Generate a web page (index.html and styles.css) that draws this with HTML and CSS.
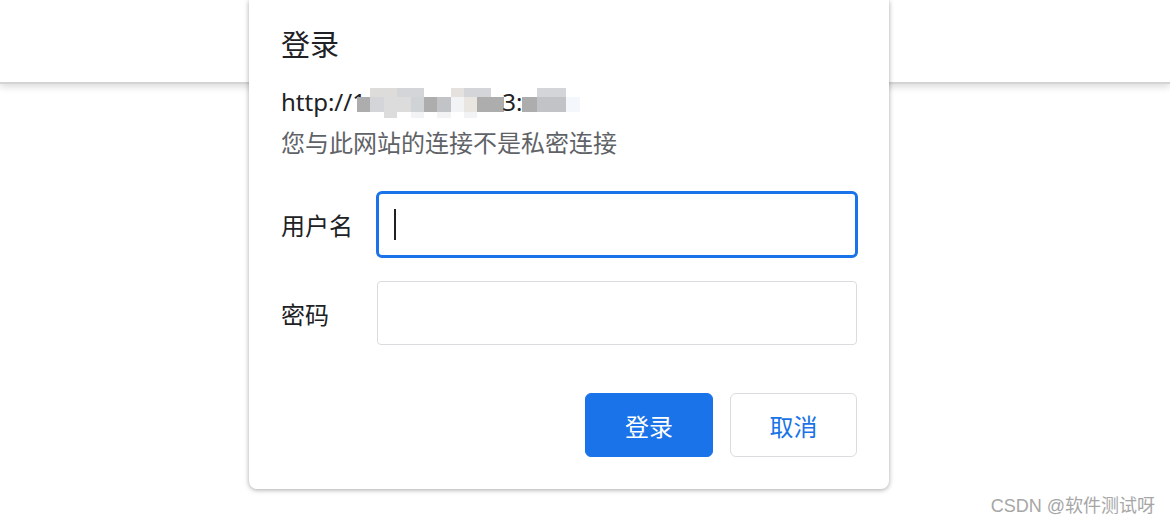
FILE: index.html
```html
<!DOCTYPE html>
<html lang="zh-CN">
<head>
  <meta charset="UTF-8">
  <title>登录</title>
  <link rel="stylesheet" href="styles.css">
</head>
<body>

  <div class="toolbar"></div>

  <div class="dialog">
    <h1 class="title">登录</h1>
    <div class="origin">
      <span>http://1</span>
      <span class="mosaic">
        <i class="c2"></i><i class="c1"></i><i class="c1"></i><i class="c3"></i><i class="c3"></i><i class="c0"></i><i class="c0"></i><i class="c4"></i><i class="c3"></i><i class="c3"></i><i class="c0"></i>
        <i class="c5"></i><i class="c6"></i><i class="c7"></i><i class="c7"></i><i class="c8"></i><i class="c5"></i><i class="c9"></i><i class="c10"></i><i class="c11"></i><i class="c5"></i><i class="c5"></i>
        <i class="c0"></i><i class="c0"></i><i class="c7"></i><i class="c0"></i><i class="c10"></i><i class="c0"></i><i class="c10"></i><i class="c0"></i><i class="c10"></i><i class="c0"></i><i class="c0"></i>
      </span>
      <span class="port">3:</span>
      <span class="mosaic short">
        <i class="c0"></i><i class="c3"></i><i class="c3"></i><i class="c0"></i>
        <i class="c5"></i><i class="c9"></i><i class="c9"></i><i class="c12"></i>
        <i class="c0"></i><i class="c0"></i><i class="c0"></i><i class="c0"></i>
      </span>
    </div>
    <p class="warning">您与此网站的连接不是私密连接</p>

    <div class="form">
      <div class="row">
        <label>用户名</label>
        <div class="field focused"><span class="caret"></span></div>
      </div>
      <div class="row">
        <label>密码</label>
        <div class="field"></div>
      </div>
    </div>

    <div class="actions">
      <button class="btn primary">登录</button>
      <button class="btn">取消</button>
    </div>
  </div>

  <div class="watermark">CSDN @软件测试呀</div>

</body>
</html>
```

FILE: styles.css
```css
body {
  margin: 0;
  background: #fff;
  font-family: "Noto Sans", "Noto Sans CJK SC", sans-serif;
  color: #202124;
  height: 523px;
  overflow: hidden;
  position: relative;
}
.toolbar {
  height: 82px;
  background: #fff;
  border-bottom: 2px solid #d4d4d4;
  box-shadow: 0 3px 7px rgba(0, 0, 0, 0.14);
}
.dialog {
  position: absolute;
  top: 0;
  left: 249px;
  width: 640px;
  box-sizing: border-box;
  padding: 25px 32px 32px;
  background: #fff;
  border-radius: 0 0 8px 8px;
  box-shadow: 0 1px 5px rgba(0, 0, 0, 0.35);
}
.title {
  margin: 0 0 16px;
  font-size: 29px;
  font-weight: normal;
  line-height: 40px;
}
.origin {
  display: flex;
  align-items: center;
  height: 41px;
  font-size: 24px;
}
.mosaic {
  display: grid;
  grid-template-columns: repeat(11, 13.4px);
  grid-template-rows: 9px 15px 6px;
  margin-left: -9px;
  margin-top: 2px;
}
.mosaic.short {
  grid-template-columns: repeat(4, 14.5px);
  margin-left: 0;
}
.port { margin-left: -2px; }
.mosaic i { display: block; }
.c0 { background: transparent; }
.c1 { background: #dedcdb; }
.c2 { background: transparent; }
.c3 { background: #d3d5d8; }
.c4 { background: #e4e1de; }
.c5 { background: #adadad; }
.c6 { background: #d3d5d9; }
.c7 { background: #dcdcdc; }
.c8 { background: #d0d3d6; }
.c9 { background: #c2c3c6; }
.c10 { background: #f2f3f4; }
.c11 { background: #e9e6e2; }
.c12 { background: #f4f8fc; }
.warning {
  margin: 0;
  font-size: 24px;
  line-height: 41px;
  color: #5f6368;
}
.form {
  margin-top: 28px;
  display: flex;
  flex-direction: column;
  gap: 23px;
}
.row {
  display: flex;
  align-items: center;
}
.row label {
  width: 96px;
  font-size: 24px;
}
.field {
  flex: 1;
  height: 64px;
  box-sizing: border-box;
  border: 1px solid #dadce0;
  border-radius: 4px;
  display: flex;
  align-items: center;
  padding-left: 15px;
}
.field.focused {
  height: 67px;
  margin: 0 -1px;
  border: 3px solid #1a73e8;
  border-radius: 6px;
}
.caret {
  width: 2px;
  height: 31px;
  background: #202124;
}
.actions {
  margin-top: 48px;
  display: flex;
  justify-content: flex-end;
  gap: 17px;
}
.btn {
  width: 127px;
  height: 64px;
  border: 1px solid #dadce0;
  border-radius: 6px;
  background: #fff;
  color: #1a73e8;
  font-family: inherit;
  font-size: 24px;
}
.btn.primary {
  width: 128px;
  background: #1a73e8;
  border-color: #1a73e8;
  color: #fff;
}
.watermark {
  position: absolute;
  right: 15px;
  bottom: 6px;
  font-family: "Liberation Sans", "Noto Sans CJK SC", sans-serif;
  font-size: 18px;
  color: #a6a6a6;
}
```
